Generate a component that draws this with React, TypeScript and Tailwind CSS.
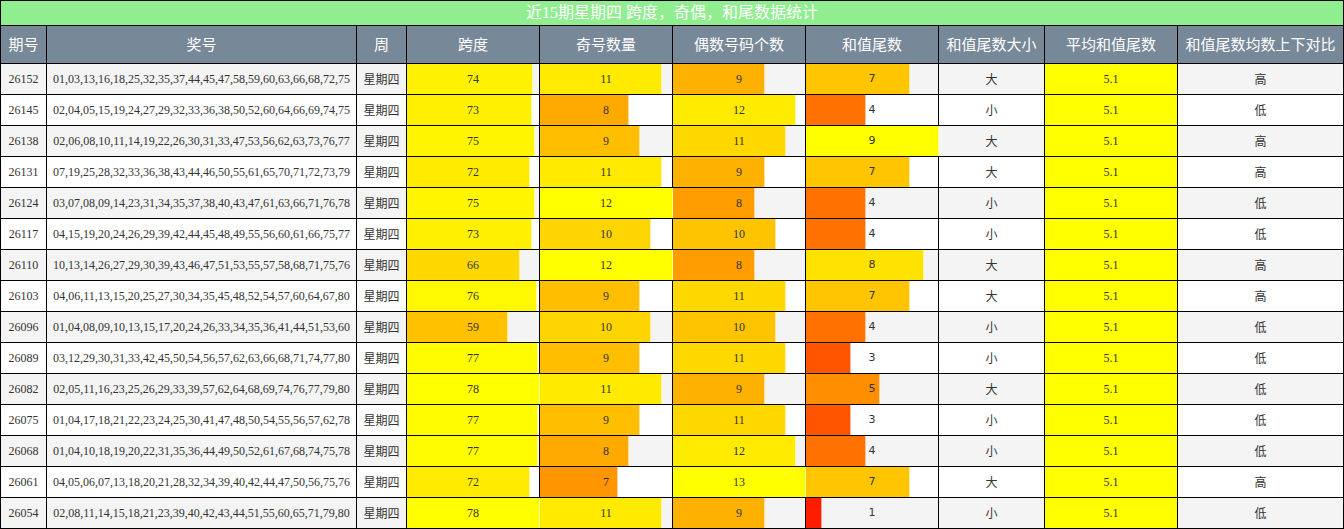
import React from "react";

type Row = {
  qh: string;
  nums: string;
  span: number;
  odd: number;
  even: number;
  tail: number;
  size: string;
  cmp: string;
};

const ROWS: Row[] = [
  { qh: "26152", nums: "01,03,13,16,18,25,32,35,37,44,45,47,58,59,60,63,66,68,72,75", span: 74, odd: 11, even: 9, tail: 7, size: "大", cmp: "高" },
  { qh: "26145", nums: "02,04,05,15,19,24,27,29,32,33,36,38,50,52,60,64,66,69,74,75", span: 73, odd: 8, even: 12, tail: 4, size: "小", cmp: "低" },
  { qh: "26138", nums: "02,06,08,10,11,14,19,22,26,30,31,33,47,53,56,62,63,73,76,77", span: 75, odd: 9, even: 11, tail: 9, size: "大", cmp: "高" },
  { qh: "26131", nums: "07,19,25,28,32,33,36,38,43,44,46,50,55,61,65,70,71,72,73,79", span: 72, odd: 11, even: 9, tail: 7, size: "大", cmp: "高" },
  { qh: "26124", nums: "03,07,08,09,14,23,31,34,35,37,38,40,43,47,61,63,66,71,76,78", span: 75, odd: 12, even: 8, tail: 4, size: "小", cmp: "低" },
  { qh: "26117", nums: "04,15,19,20,24,26,29,39,42,44,45,48,49,55,56,60,61,66,75,77", span: 73, odd: 10, even: 10, tail: 4, size: "小", cmp: "低" },
  { qh: "26110", nums: "10,13,14,26,27,29,30,39,43,46,47,51,53,55,57,58,68,71,75,76", span: 66, odd: 12, even: 8, tail: 8, size: "大", cmp: "高" },
  { qh: "26103", nums: "04,06,11,13,15,20,25,27,30,34,35,45,48,52,54,57,60,64,67,80", span: 76, odd: 9, even: 11, tail: 7, size: "大", cmp: "高" },
  { qh: "26096", nums: "01,04,08,09,10,13,15,17,20,24,26,33,34,35,36,41,44,51,53,60", span: 59, odd: 10, even: 10, tail: 4, size: "小", cmp: "低" },
  { qh: "26089", nums: "03,12,29,30,31,33,42,45,50,54,56,57,62,63,66,68,71,74,77,80", span: 77, odd: 9, even: 11, tail: 3, size: "小", cmp: "低" },
  { qh: "26082", nums: "02,05,11,16,23,25,26,29,33,39,57,62,64,68,69,74,76,77,79,80", span: 78, odd: 11, even: 9, tail: 5, size: "大", cmp: "低" },
  { qh: "26075", nums: "01,04,17,18,21,22,23,24,25,30,41,47,48,50,54,55,56,57,62,78", span: 77, odd: 9, even: 11, tail: 3, size: "小", cmp: "低" },
  { qh: "26068", nums: "01,04,10,18,19,20,22,31,35,36,44,49,50,52,61,67,68,74,75,78", span: 77, odd: 8, even: 12, tail: 4, size: "小", cmp: "低" },
  { qh: "26061", nums: "04,05,06,07,13,18,20,21,28,32,34,39,40,42,44,47,50,56,75,76", span: 72, odd: 7, even: 13, tail: 7, size: "大", cmp: "高" },
  { qh: "26054", nums: "02,08,11,14,15,18,21,23,39,40,42,43,44,51,55,60,65,71,79,80", span: 78, odd: 11, even: 9, tail: 1, size: "小", cmp: "低" },
];

const HEADERS = ["期号", "奖号", "周", "跨度", "奇号数量", "偶数号码个数", "和值尾数", "和值尾数大小", "平均和值尾数", "和值尾数均数上下对比"];

const maxOf = (k: "span" | "odd" | "even" | "tail") => Math.max(...ROWS.map((r) => r[k]));

// 条形单元格：宽度和颜色按占最大值的比例计算
function BarCell({ value, max, bg, sans }: { value: number; max: number; bg: string; sans?: boolean }) {
  const ratio = value / max;
  const hue = 60 * ratio;
  return (
    <div className={`relative flex items-center justify-center ${bg}`}>
      <div
        className="absolute inset-y-0 left-0"
        style={{
          width: `${ratio * 100}%`,
          background: `hsl(${hue} 100% 50%)`,
          boxShadow: `1px 0 0 hsl(${hue} 100% 80%)`,
        }}
      />
      <span className={`relative ${sans ? "font-['DejaVu_Sans',sans-serif] text-[11px]" : ""}`}>{value}</span>
    </div>
  );
}

export default function App() {
  const mSpan = maxOf("span");
  const mOdd = maxOf("odd");
  const mEven = maxOf("even");
  const mTail = maxOf("tail");

  return (
    <div className="w-[1344px] bg-black font-['Liberation_Serif','Noto_Sans_CJK_SC',serif] text-[12px] text-[#333]">
      <div className="grid grid-cols-[45px_309px_49px_132px_132px_132px_132px_105px_132px_165px] grid-rows-[24px_37px_repeat(15,30px)] gap-px p-px">
        {/* 标题 */}
        <div className="col-span-10 flex items-center justify-center bg-[#90ee90] text-[16px] text-white">
          近15期星期四 跨度，奇偶，和尾数据统计
        </div>

        {/* 表头 */}
        {HEADERS.map((h) => (
          <div key={h} className="flex items-center justify-center bg-[#778899] font-['Noto_Sans_CJK_SC',sans-serif] text-[15px] text-white">
            {h}
          </div>
        ))}

        {/* 数据行 */}
        {ROWS.map((r, i) => {
          const bg = i % 2 === 0 ? "bg-[#f4f4f4]" : "bg-white";
          return (
            <React.Fragment key={r.qh}>
              <div className={`flex items-center justify-center ${bg}`}>{r.qh}</div>
              <div className={`flex items-center justify-center ${bg}`}>{r.nums}</div>
              <div className={`flex items-center justify-center ${bg} font-['Noto_Sans_CJK_SC',sans-serif]`}>星期四</div>
              <BarCell value={r.span} max={mSpan} bg={bg} />
              <BarCell value={r.odd} max={mOdd} bg={bg} />
              <BarCell value={r.even} max={mEven} bg={bg} />
              <BarCell value={r.tail} max={mTail} bg={bg} sans />
              <div className={`flex items-center justify-center ${bg} font-['Noto_Sans_CJK_SC',sans-serif]`}>{r.size}</div>
              <div className="flex items-center justify-center bg-[#ffff00]">5.1</div>
              <div className={`flex items-center justify-center ${bg} font-['Noto_Sans_CJK_SC',sans-serif]`}>{r.cmp}</div>
            </React.Fragment>
          );
        })}
      </div>
    </div>
  );
}
